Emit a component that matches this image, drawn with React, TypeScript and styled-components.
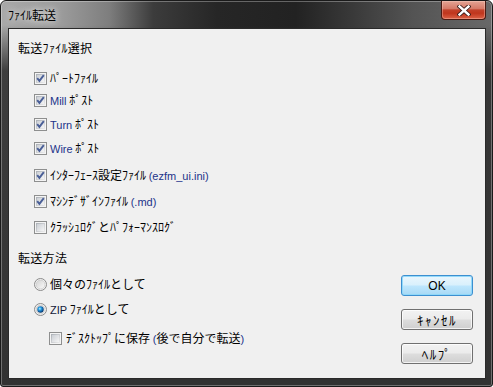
import React from "react";
import styled, { createGlobalStyle } from "styled-components";

const Global = createGlobalStyle`
  html, body { margin: 0; padding: 0; background: #ffffff; }
  body { font-family: "Liberation Sans", "Noto Sans CJK JP", sans-serif; }
  #root { width: 493px; height: 387px; }
`;

const Window = styled.div`
  width: 493px;
  height: 387px;
  box-sizing: border-box;
  display: flex;
  flex-direction: column;
  border: 1px solid #1a1a1a;
  border-radius: 6px 6px 3px 3px;
  overflow: hidden;
  background:
    linear-gradient(180deg, rgba(50, 50, 50, 0) 0px, rgba(50, 50, 50, 0) 24px, rgba(50, 50, 50, 0.9) 70px, #323232 100%),
    linear-gradient(90deg, #a9a9a9 0%, #9c9c9c 12%, #7e7e7e 22%, #3c3c3c 31%, #262626 44%, #222222 60%, #383838 71%, #545454 84%, #686868 100%);
  box-shadow: inset 0 0 0 1px rgba(255, 255, 255, 0.3);
`;

const TitleBar = styled.div`
  height: 27px;
  flex-shrink: 0;
  display: flex;
  align-items: flex-start;
  padding-left: 7px;
  padding-right: 6px;
`;

const Title = styled.div`
  flex: 1;
  align-self: center;
  font-family: "Noto Sans CJK JP", sans-serif;
  font-size: 12px;
  line-height: 16px;
  color: #000;
  margin-top: 1px;
  text-shadow: 0 0 6px rgba(255, 255, 255, 0.85), 0 0 10px rgba(255, 255, 255, 0.5);
`;

const CloseButton = styled.div`
  width: 45px;
  height: 19px;
  box-sizing: border-box;
  border: 1px solid #4a1a12;
  border-top: none;
  border-radius: 0 0 4px 4px;
  display: flex;
  align-items: center;
  justify-content: center;
  background: linear-gradient(180deg, #e4a494 0%, #d67a68 42%, #c2412a 50%, #c0361d 68%, #dc6247 100%);
  box-shadow: inset 0 0 0 1px rgba(255, 220, 210, 0.35);
`;

const Content = styled.div`
  flex: 1;
  margin: 0 6px 7px 7px;
  background: #f0f0f0;
  border: 1px solid #2a2a2a;
  display: flex;
  padding: 11px 12px 14px 9px;
  min-height: 0;
`;

const LeftColumn = styled.div`
  flex: 1;
  display: flex;
  flex-direction: column;
`;

const RightColumn = styled.div`
  display: flex;
  flex-direction: column;
  justify-content: flex-end;
  gap: 13px;
`;

const Heading = styled.div<{ $mt?: number }>`
  font-family: "Noto Sans CJK JP", sans-serif;
  font-size: 12px;
  line-height: 16px;
  height: 16px;
  color: #000;
  letter-spacing: 0.3px;
  margin-top: ${(p) => p.$mt ?? 0}px;
`;

const Row = styled.div<{ $mt: number; $indent?: number }>`
  display: flex;
  align-items: center;
  height: 16px;
  margin-top: ${(p) => p.$mt}px;
  margin-left: ${(p) => p.$indent ?? 16}px;
  gap: ${(p) => (p.$indent && p.$indent > 20 ? 4 : 3)}px;
`;

const Label = styled.span`
  font-family: "Noto Sans CJK JP", sans-serif;
  font-size: 12px;
  line-height: 16px;
  color: #000;
  white-space: nowrap;
`;

const Lat = styled.span<{ $blue?: boolean }>`
  font-family: "Liberation Sans", sans-serif;
  font-size: 11px;
  line-height: 16px;
  letter-spacing: 0;
  color: ${(p) => (p.$blue ? "#22338a" : "#141838")};
`;

const Icon = styled.svg`
  flex-shrink: 0;
  display: block;
`;

const Button = styled.button<{ $default?: boolean }>`
  width: 72px;
  height: 21px;
  box-sizing: border-box;
  padding: 0;
  margin: 0;
  border: 1px solid ${(p) => (p.$default ? "#3c8fd0" : "#707070")};
  border-radius: 3px;
  background: ${(p) =>
    p.$default
      ? "linear-gradient(180deg, #eaf6fd 0%, #d9f0fc 48%, #bee6fd 52%, #a7d9f5 100%)"
      : "linear-gradient(180deg, #f2f2f2 0%, #ebebeb 48%, #dddddd 52%, #cfcfcf 100%)"};
  box-shadow: ${(p) =>
    p.$default
      ? "inset 0 0 0 1px rgba(140, 215, 250, 0.9)"
      : "inset 0 0 0 1px rgba(255, 255, 255, 0.75)"};
  font-family: "Noto Sans CJK JP", sans-serif;
  font-size: 13px;
  letter-spacing: 1.5px;
  line-height: 16px;
  color: #000;
  display: flex;
  align-items: center;
  justify-content: center;
`;

const ButtonLat = styled.span`
  font-family: "Liberation Sans", sans-serif;
  font-size: 12px;
  letter-spacing: 0;
`;

const CloseGlyph = () => (
  <Icon width="14" height="11" viewBox="0 0 14 11">
    <path d="M2.5 1.5 L11.5 9.5 M11.5 1.5 L2.5 9.5" stroke="#3a1d1a" strokeWidth="4.2" strokeLinecap="square" />
    <path d="M2.5 1.5 L11.5 9.5 M11.5 1.5 L2.5 9.5" stroke="#ffffff" strokeWidth="2.4" strokeLinecap="square" />
  </Icon>
);

const CheckBox = ({ checked }: { checked: boolean }) => (
  <Icon width="13" height="13" viewBox="0 0 13 13">
    <defs>
      <linearGradient id="cbFill" x1="0" y1="0" x2="1" y2="1">
        <stop offset="0" stopColor="#c9cdd3" />
        <stop offset="1" stopColor="#f7f7f7" />
      </linearGradient>
      <linearGradient id="cbEdge" x1="0" y1="0" x2="1" y2="1">
        <stop offset="0" stopColor="#aeb3b9" />
        <stop offset="1" stopColor="#e9e9ea" />
      </linearGradient>
    </defs>
    <rect x="0.5" y="0.5" width="12" height="12" fill="#f4f4f4" stroke="#8e8f8f" />
    <rect x="2.5" y="2.5" width="8" height="8" fill="url(#cbFill)" stroke="url(#cbEdge)" />
    {checked && (
      <path d="M3.2 6.2 L5.4 8.9 L9.8 3.2" fill="none" stroke="#4a5f97" strokeWidth="1.9" />
    )}
  </Icon>
);

const Radio = ({ checked }: { checked: boolean }) => (
  <Icon width="13" height="13" viewBox="0 0 13 13">
    <defs>
      <linearGradient id="rdFill" x1="0" y1="0" x2="1" y2="1">
        <stop offset="0" stopColor="#d2d2d2" />
        <stop offset="1" stopColor="#fbfbfb" />
      </linearGradient>
      <radialGradient id="rdDot" cx="0.4" cy="0.38" r="0.65">
        <stop offset="0" stopColor="#bff2ff" />
        <stop offset="0.35" stopColor="#2aa0e4" />
        <stop offset="0.8" stopColor="#0b4f92" />
        <stop offset="1" stopColor="#08335f" />
      </radialGradient>
    </defs>
    <circle cx="6.5" cy="6.5" r="6" fill="#f2f2f2" stroke="#8a8a8a" strokeWidth="1" />
    <circle cx="6.5" cy="6.5" r="4.4" fill="url(#rdFill)" stroke="#c2c2c2" strokeWidth="0.6" />
    {checked && <circle cx="6.5" cy="6.5" r="3.2" fill="url(#rdDot)" />}
  </Icon>
);

export default function App() {
  return (
    <>
      <Global />
      <Window>
        <TitleBar>
          <Title>ﾌｧｲﾙ転送</Title>
          <CloseButton>
            <CloseGlyph />
          </CloseButton>
        </TitleBar>
        <Content>
          <LeftColumn>
            <Heading>転送ﾌｧｲﾙ選択</Heading>
            <Row $mt={14}>
              <CheckBox checked />
              <Label>ﾊﾟｰﾄﾌｧｲﾙ</Label>
            </Row>
            <Row $mt={6}>
              <CheckBox checked />
              <Label>
                <Lat $blue>Mill</Lat> ﾎﾟｽﾄ
              </Label>
            </Row>
            <Row $mt={8}>
              <CheckBox checked />
              <Label>
                <Lat $blue>Turn</Lat> ﾎﾟｽﾄ
              </Label>
            </Row>
            <Row $mt={8}>
              <CheckBox checked />
              <Label>
                <Lat $blue>Wire</Lat> ﾎﾟｽﾄ
              </Label>
            </Row>
            <Row $mt={11}>
              <CheckBox checked />
              <Label>
                ｲﾝﾀｰﾌｪｰｽ設定ﾌｧｲﾙ <Lat $blue>(ezfm_ui.ini)</Lat>
              </Label>
            </Row>
            <Row $mt={10}>
              <CheckBox checked />
              <Label>
                ﾏｼﾝﾃﾞｻﾞｲﾝﾌｧｲﾙ <Lat $blue>(.md)</Lat>
              </Label>
            </Row>
            <Row $mt={10}>
              <CheckBox checked={false} />
              <Label>ｸﾗｯｼｭﾛｸﾞとﾊﾟﾌｫｰﾏﾝｽﾛｸﾞ</Label>
            </Row>
            <Heading $mt={15}>転送方法</Heading>
            <Row $mt={10}>
              <Radio checked={false} />
              <Label>個々のﾌｧｲﾙとして</Label>
            </Row>
            <Row $mt={9}>
              <Radio checked />
              <Label>
                <Lat>ZIP</Lat> ﾌｧｲﾙとして
              </Label>
            </Row>
            <Row $mt={13} $indent={31}>
              <CheckBox checked={false} />
              <Label>
                ﾃﾞｽｸﾄｯﾌﾟに保存 <Lat $blue>(</Lat>後で自分で転送<Lat $blue>)</Lat>
              </Label>
            </Row>
          </LeftColumn>
          <RightColumn>
            <Button $default>
              <ButtonLat>OK</ButtonLat>
            </Button>
            <Button>ｷｬﾝｾﾙ</Button>
            <Button>ﾍﾙﾌﾟ</Button>
          </RightColumn>
        </Content>
      </Window>
    </>
  );
}
